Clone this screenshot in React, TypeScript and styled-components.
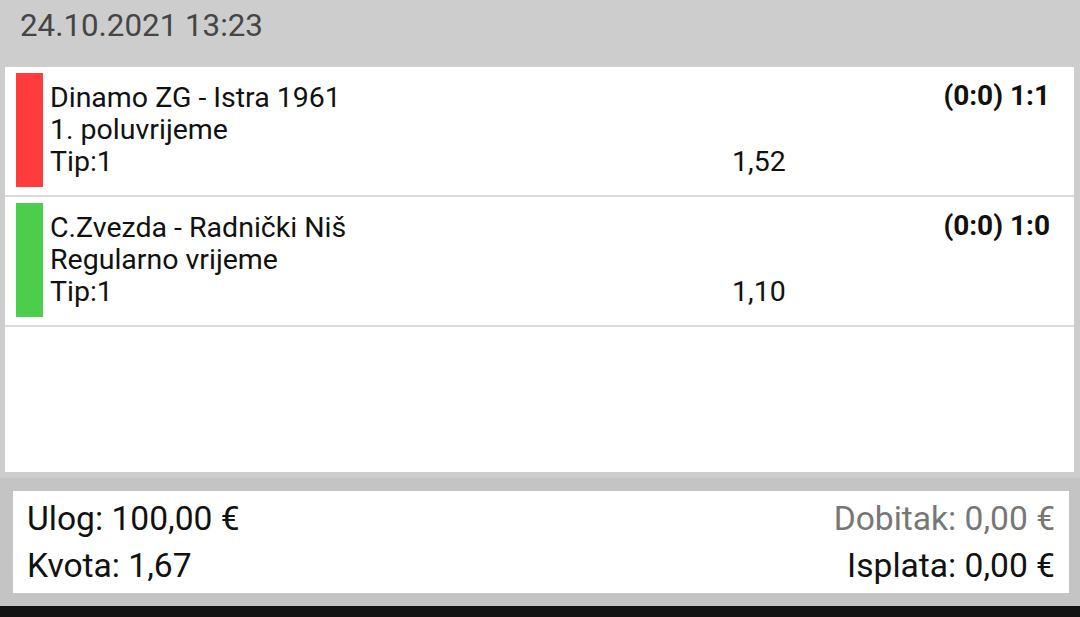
import React from "react";
import styled, { createGlobalStyle } from "styled-components";

type Bet = {
  match: string;
  period: string;
  tip: string;
  odds: string;
  score: string;
  won: boolean;
};

const bets: Bet[] = [
  {
    match: "Dinamo ZG - Istra 1961",
    period: "1. poluvrijeme",
    tip: "Tip:1",
    odds: "1,52",
    score: "(0:0) 1:1",
    won: false,
  },
  {
    match: "C.Zvezda - Radnički Niš",
    period: "Regularno vrijeme",
    tip: "Tip:1",
    odds: "1,10",
    score: "(0:0) 1:0",
    won: true,
  },
];

const App: React.FunctionComponent = () => {
  return (
    <Screen>
      <GlobalStyle />
      <Header>24.10.2021 13:23</Header>
      <Ticket>
        {bets.map((bet) => (
          <BetRow key={bet.match}>
            <StatusBar $won={bet.won} />
            <BetInfo>
              <Line>{bet.match}</Line>
              <Score>{bet.score}</Score>
              <Line>{bet.period}</Line>
              <span />
              <Line>{bet.tip}</Line>
              <Odds>{bet.odds}</Odds>
            </BetInfo>
          </BetRow>
        ))}
      </Ticket>
      <Footer>
        <Summary>
          <SummaryText>Ulog: 100,00 €</SummaryText>
          <SummaryText $muted>Dobitak: 0,00 €</SummaryText>
          <SummaryText>Kvota: 1,67</SummaryText>
          <SummaryText>Isplata: 0,00 €</SummaryText>
        </Summary>
      </Footer>
      <NavBar />
    </Screen>
  );
};

export default App;

const GlobalStyle = createGlobalStyle`
  html, body {
    margin: 0;
    padding: 0;
    background: #cdcdcd;
  }

  body {
    font-family: Roboto, "Liberation Sans", sans-serif;
    color: #111;
  }
`;

const Screen = styled.div`
  display: flex;
  flex-direction: column;
  width: 1080px;
  height: 617px;
  overflow: hidden;
  background: #cdcdcd;
`;

const Header = styled.div`
  height: 67px;
  padding: 6px 0 0 20px;
  box-sizing: border-box;
  font-size: 31.3px;
  line-height: 40px;
  color: #454545;
`;

const Ticket = styled.div`
  height: 405px;
  margin: 0 6px 6px 5px;
  background: #fff;
`;

const BetRow = styled.div`
  display: flex;
  align-items: center;
  gap: 7px;
  height: 130px;
  padding: 6px 24px 8px 11px;
  box-sizing: border-box;
  border-bottom: 2px solid #dddddd;
`;

const StatusBar = styled.div<{ $won: boolean }>`
  align-self: stretch;
  width: 27px;
  background: ${(p) => (p.$won ? "#4ccd4c" : "#ff3b3b")};
`;

const BetInfo = styled.div`
  flex: 1;
  display: grid;
  grid-template-columns: 682px 1fr;
  grid-auto-rows: 32px;
  font-size: 28.5px;
  line-height: 32px;
`;

const Line = styled.div`
  white-space: nowrap;
`;

const Score = styled.div`
  text-align: right;
  font-weight: 700;
  font-size: 28px;
  margin-top: -2px;
`;

const Odds = styled.div``;

const Footer = styled.div`
  flex: 1;
  padding: 13px 11px 13px 13px;
  background: #c4c4c4;
`;

const Summary = styled.div`
  display: grid;
  grid-template-columns: 1fr 1fr;
  grid-auto-rows: 47px;
  align-content: center;
  height: 102px;
  padding: 0 14px;
  background: #fff;
  font-size: 33.6px;
  line-height: 47px;
`;

const SummaryText = styled.div<{ $muted?: boolean }>`
  color: ${(p) => (p.$muted ? "#777" : "#111")};

  &:nth-child(even) {
    text-align: right;
  }
`;

const NavBar = styled.div`
  height: 11px;
  background: #131313;
`;
